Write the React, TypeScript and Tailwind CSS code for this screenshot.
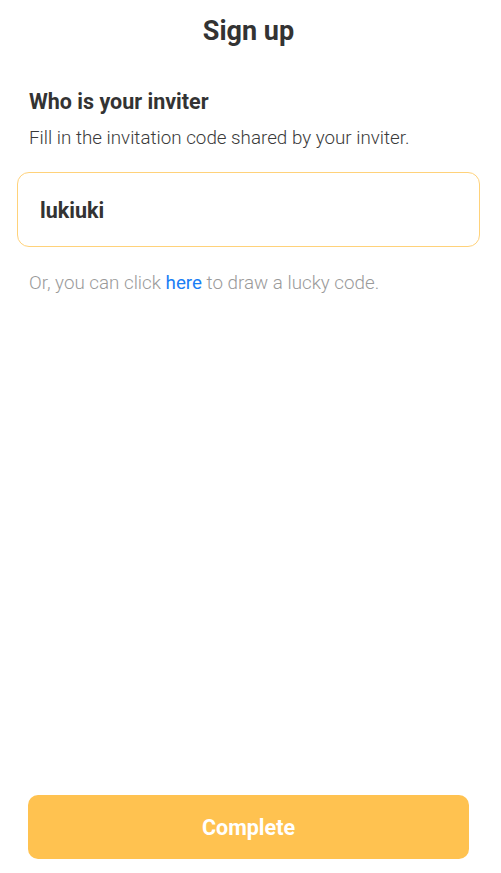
export default function App() {
  return (
    <div className="h-[873px] w-[501px] bg-white">
      <div className="flex h-[873px] w-[497px] flex-col text-[#333333]" style={{ fontFamily: "Roboto, 'Noto Sans', sans-serif" }}>
        <div className="flex h-[62px] items-center justify-center">
          <h1 className="text-[27px] font-bold leading-none">Sign up</h1>
        </div>
        <div className="px-[29px] pt-[28px]">
          <h2 className="text-[21.5px] font-bold leading-[24px]">Who is your inviter</h2>
          <p className="mt-[12px] text-[18.8px] font-light leading-[24px] text-[#3a3a3a]">Fill in the invitation code shared by your inviter.</p>
        </div>
        <div className="mx-[17px] mt-[22px] flex h-[75px] items-center rounded-[12px] border border-[#ffd27a] px-[22px] pt-[3px]">
          <span className="text-[21.5px] font-bold text-[#333333]">lukiuki</span>
        </div>
        <p className="mt-[24px] px-[29px] text-[18.8px] font-light leading-[24px] text-[#9a9a9a]">
          Or, you can click <span className="font-normal text-[#1a7ef5]">here</span> to draw a lucky code.
        </p>
        <div className="flex-1" />
        <div className="px-[28px] pb-[14px]">
          <button className="flex h-[64px] w-full items-center justify-center rounded-[10px] bg-[#ffc250] pt-[2px] text-[21.5px] font-bold text-white">Complete</button>
        </div>
      </div>
    </div>
  );
}
